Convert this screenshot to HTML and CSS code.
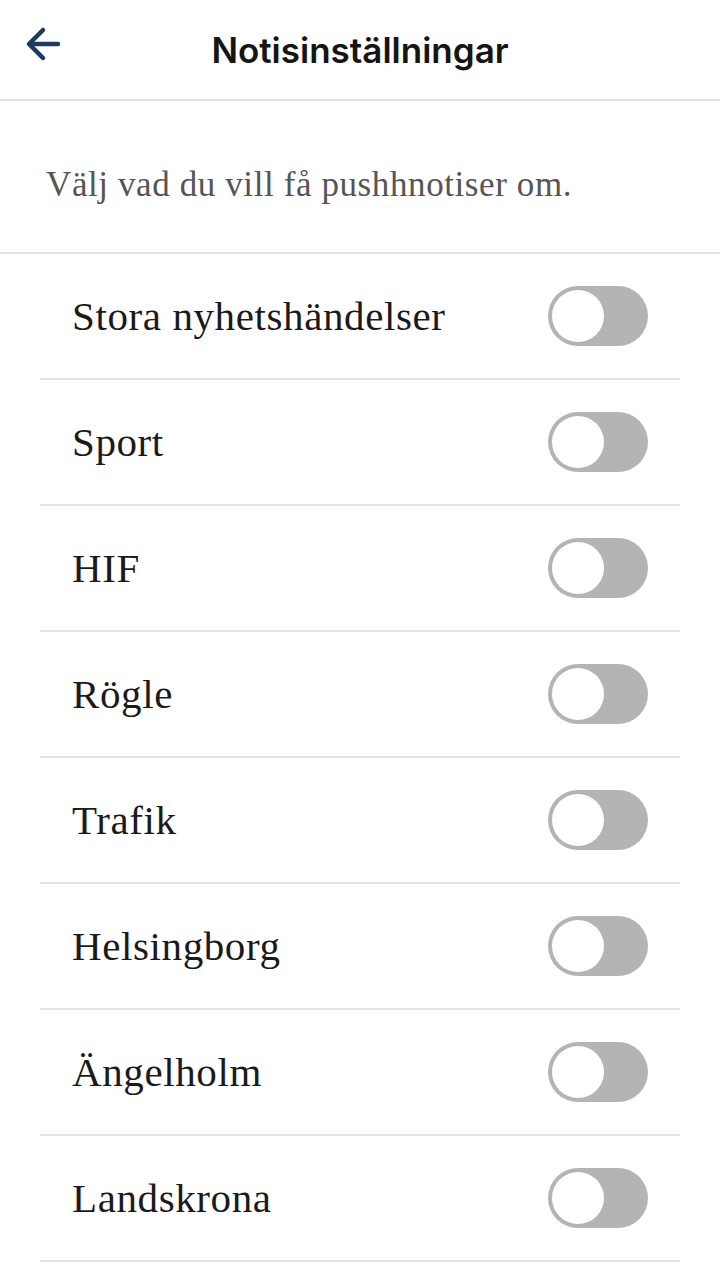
FILE: index.html
```html
<!DOCTYPE html>
<html lang="sv">
<head>
    <meta charset="UTF-8">
    <meta name="viewport" content="width=device-width, initial-scale=1.0">
    <title>Notisinställningar</title>
    <link rel="stylesheet" href="styles.css">
</head>
<body>
    <header class="topbar">
        <a class="back" href="#" aria-label="Tillbaka">
            <svg width="40" height="40" viewBox="0 0 40 40" fill="none" stroke="#1f3a5f" stroke-width="4.5" stroke-linecap="round" stroke-linejoin="round">
                <path d="M34 20H6"/>
                <path d="M19 6L5 20l14 14"/>
            </svg>
        </a>
        <h1>Notisinställningar</h1>
    </header>

    <p class="intro">Välj vad du vill få pushhnotiser om.</p>

    <ul class="topics">
        <li><span>Stora nyhetshändelser</span><label class="switch"><input type="checkbox"><i></i></label></li>
        <li><span>Sport</span><label class="switch"><input type="checkbox"><i></i></label></li>
        <li><span>HIF</span><label class="switch"><input type="checkbox"><i></i></label></li>
        <li><span>Rögle</span><label class="switch"><input type="checkbox"><i></i></label></li>
        <li><span>Trafik</span><label class="switch"><input type="checkbox"><i></i></label></li>
        <li><span>Helsingborg</span><label class="switch"><input type="checkbox"><i></i></label></li>
        <li><span>Ängelholm</span><label class="switch"><input type="checkbox"><i></i></label></li>
        <li><span>Landskrona</span><label class="switch"><input type="checkbox"><i></i></label></li>
    </ul>
</body>
</html>
```

FILE: styles.css
```css
body {
    margin: 0;
    background: #fff;
    font-family: "Liberation Serif", serif;
    color: #1a1a1a;
}
.topbar {
    height: 99px;
    display: flex;
    align-items: center;
    justify-content: center;
    position: relative;
    border-bottom: 2px solid #e4e4e4;
}
.back {
    position: absolute;
    left: 24px;
    top: 24px;
    display: flex;
}
.topbar h1 {
    margin: 0;
    font-family: Inter, sans-serif;
    font-weight: 600;
    font-size: 35px;
    color: #151515;
}
.intro {
    margin: 0;
    padding: 16px 46px 0;
    height: 135px;
    display: flex;
    align-items: center;
    font-size: 35px;
    letter-spacing: 0.6px;
    color: #555;
    border-bottom: 2px solid #e4e4e4;
}
.topics {
    list-style: none;
    margin: 0;
    padding: 0 40px;
}
.topics li {
    height: 124px;
    display: flex;
    align-items: center;
    justify-content: space-between;
    padding: 0 32px;
    border-bottom: 2px solid #e4e4e4;
    font-size: 41px;
    letter-spacing: 0.6px;
}
.switch {
    position: relative;
    width: 100px;
    height: 60px;
    cursor: pointer;
}
.switch input {
    display: none;
}
.switch i {
    display: block;
    width: 100%;
    height: 100%;
    border-radius: 30px;
    background: #b4b4b4;
    position: relative;
}
.switch i::after {
    content: "";
    position: absolute;
    left: 4px;
    top: 4px;
    width: 52px;
    height: 52px;
    border-radius: 50%;
    background: #fff;
}
.switch input:checked + i {
    background: #1f3a5f;
}
.switch input:checked + i::after {
    left: 44px;
}
```
